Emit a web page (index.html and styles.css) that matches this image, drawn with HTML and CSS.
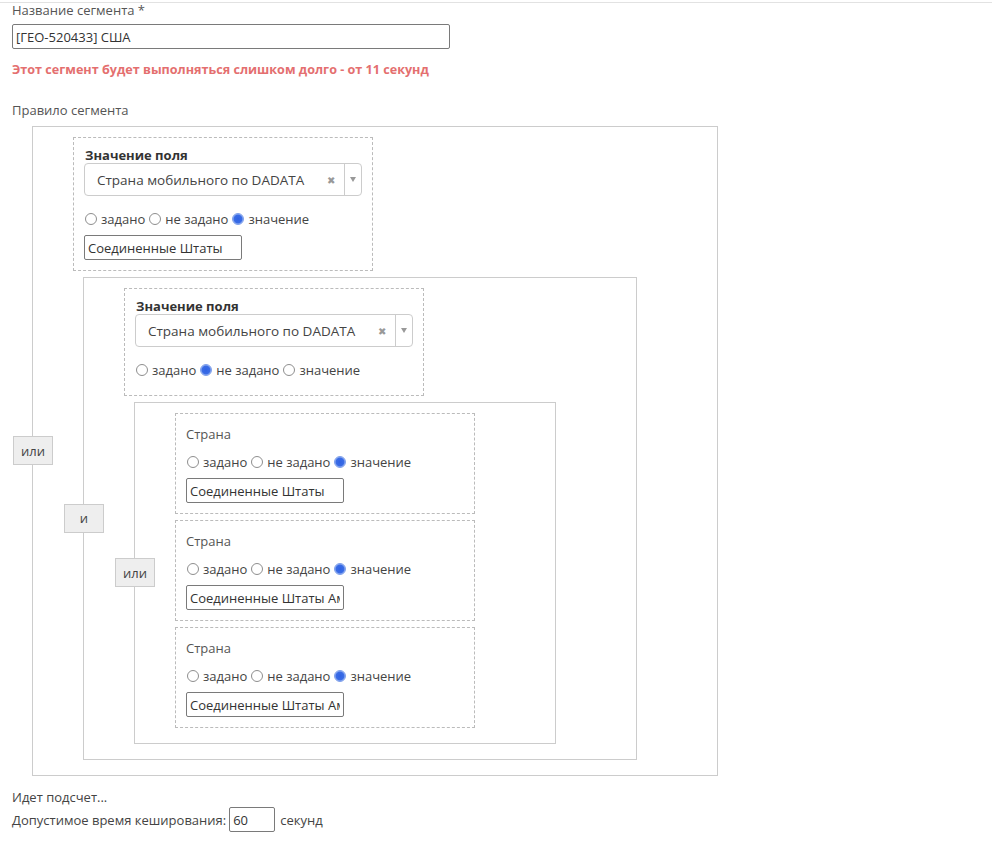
FILE: index.html
```html
<!DOCTYPE html>
<html lang="ru">
<head>
    <meta charset="UTF-8">
    <meta name="viewport" content="width=device-width, initial-scale=1.0">
    <title>Сегмент</title>
    <link rel="stylesheet" href="styles.css">
</head>
<body>
    <div class="page">
        <label class="field-label">Название сегмента *</label>
        <input class="text-input name-input" type="text" value="[ГЕО-520433] США">
        <div class="warning">Этот сегмент будет выполняться слишком долго - от 11 секунд</div>

        <div class="field-label rule-label">Правило сегмента</div>

        <div class="group group-root">
            <button class="op-button">или</button>

            <div class="cond">
                <div class="cond-title">Значение поля</div>
                <div class="select">
                    <span class="select-value">Страна мобильного по DADATA</span>
                    <span class="select-clear">&#10006;</span>
                    <span class="select-arrow"><span class="arrow-down"></span></span>
                </div>
                <div class="radio-row">
                    <label><input type="radio" name="r1">задано</label>
                    <label><input type="radio" name="r1">не задано</label>
                    <label><input type="radio" name="r1" checked>значение</label>
                </div>
                <input class="text-input value-input" type="text" value="Соединенные Штаты">
            </div>

            <div class="group">
                <button class="op-button">и</button>

                <div class="cond cond-no-input">
                    <div class="cond-title">Значение поля</div>
                    <div class="select">
                        <span class="select-value">Страна мобильного по DADATA</span>
                        <span class="select-clear">&#10006;</span>
                        <span class="select-arrow"><span class="arrow-down"></span></span>
                    </div>
                    <div class="radio-row">
                        <label><input type="radio" name="r2">задано</label>
                        <label><input type="radio" name="r2" checked>не задано</label>
                        <label><input type="radio" name="r2">значение</label>
                    </div>
                </div>

                <div class="group">
                    <button class="op-button">или</button>

                    <div class="cond cond-small">
                        <div class="cond-label">Страна</div>
                        <div class="radio-row">
                            <label><input type="radio" name="r3">задано</label>
                            <label><input type="radio" name="r3">не задано</label>
                            <label><input type="radio" name="r3" checked>значение</label>
                        </div>
                        <input class="text-input value-input" type="text" value="Соединенные Штаты">
                    </div>

                    <div class="cond cond-small">
                        <div class="cond-label">Страна</div>
                        <div class="radio-row">
                            <label><input type="radio" name="r4">задано</label>
                            <label><input type="radio" name="r4">не задано</label>
                            <label><input type="radio" name="r4" checked>значение</label>
                        </div>
                        <input class="text-input value-input" type="text" value="Соединенные Штаты Америки">
                    </div>

                    <div class="cond cond-small">
                        <div class="cond-label">Страна</div>
                        <div class="radio-row">
                            <label><input type="radio" name="r5">задано</label>
                            <label><input type="radio" name="r5">не задано</label>
                            <label><input type="radio" name="r5" checked>значение</label>
                        </div>
                        <input class="text-input value-input" type="text" value="Соединенные Штаты Америки">
                    </div>
                </div>
            </div>
        </div>

        <div class="status">Идет подсчет...</div>
        <div class="cache-row">
            Допустимое время кеширования:
            <input class="text-input cache-input" type="text" value="60">
            секунд
        </div>
    </div>
</body>
</html>
```

FILE: styles.css
```css
* {
    margin: 0;
    padding: 0;
    box-sizing: border-box;
}

body {
    font-family: "Open Sans", "Liberation Sans", sans-serif;
    font-size: 13px;
    color: #444444;
    background-color: #FFFFFF;
}

.page {
    margin-top: 2px;
    border-top: 1px solid #E2E2E2;
    padding: 0 12px 20px 12px;
}

.field-label {
    display: block;
    line-height: 14px;
    color: #555555;
}

.text-input {
    display: block;
    height: 25px;
    border: 1px solid #7A7A7A;
    border-radius: 2px;
    padding: 0 3px;
    font-family: inherit;
    font-size: 13px;
    color: #333333;
    background-color: #FFFFFF;
    outline: none;
}

.name-input {
    width: 438px;
    margin-top: 7px;
}

.warning {
    margin-top: 12px;
    line-height: 18px;
    font-size: 12.6px;
    font-weight: 700;
    color: #E46F6F;
}

.rule-label {
    margin-top: 22px;
    line-height: 18px;
}

.group {
    position: relative;
    border: 1px solid #CCCCCC;
    padding: 10px 80px 15px 40px;
}

.group-root {
    width: 686px;
    margin: 7px 0 0 20px;
}

.group .group {
    margin-left: 10px;
}

.cond + .cond,
.cond + .group {
    margin-top: 6px;
}

.op-button {
    position: absolute;
    left: -20px;
    top: 50%;
    margin-top: -15px;
    width: 40px;
    height: 29px;
    border: 1px solid #CCCCCC;
    background-color: #EEEEEE;
    font-family: inherit;
    font-size: 13px;
    color: #444444;
    cursor: pointer;
}

.cond {
    width: 300px;
    border: 1px dashed #BBBBBB;
    padding: 10px;
}

.cond-no-input {
    padding-bottom: 9px;
}

.cond-title {
    font-weight: 700;
    line-height: 15px;
    color: #333333;
    padding-left: 1px;
}

.cond-label {
    line-height: 20px;
    color: #555555;
}

.select {
    display: flex;
    align-items: center;
    height: 33px;
    border: 1px solid #CCCCCC;
    border-radius: 4px;
    font-size: 13.5px;
    color: #444444;
}

.select-value {
    flex: 1;
    padding-left: 12px;
    white-space: nowrap;
    overflow: hidden;
}

.select-clear {
    font-size: 10px;
    color: #999999;
    margin-right: 9px;
}

.select-arrow {
    display: flex;
    align-items: center;
    justify-content: center;
    width: 17px;
    height: 100%;
    border-left: 1px solid #CCCCCC;
}

.arrow-down {
    width: 0;
    height: 0;
    border-left: 3px solid transparent;
    border-right: 3px solid transparent;
    border-top: 5px solid #999999;
}

.radio-row {
    display: flex;
    align-items: center;
    height: 21px;
    margin: 12px 0 6px 0;
    white-space: nowrap;
}

.cond-small .radio-row {
    margin-top: 7px;
}

.radio-row label {
    display: flex;
    align-items: center;
    margin-right: 3px;
}

.radio-row input {
    appearance: none;
    width: 12px;
    height: 12px;
    margin: 0 4px 0 1px;
    border: 1px solid #8E8E8E;
    border-radius: 50%;
    background-color: #FFFFFF;
}

.radio-row input:checked {
    border-color: #7C9EEB;
    background: radial-gradient(circle, #2F62E3 0, #3A6CE6 55%, #A9C0F2 75%);
}

.value-input {
    width: 158px;
}

.status {
    margin-top: 12px;
    line-height: 18px;
}

.cache-row {
    display: flex;
    align-items: center;
    margin-top: 1px;
    line-height: 18px;
}

.cache-input {
    width: 46px;
    margin: 0 5px 0 3px;
}
```
